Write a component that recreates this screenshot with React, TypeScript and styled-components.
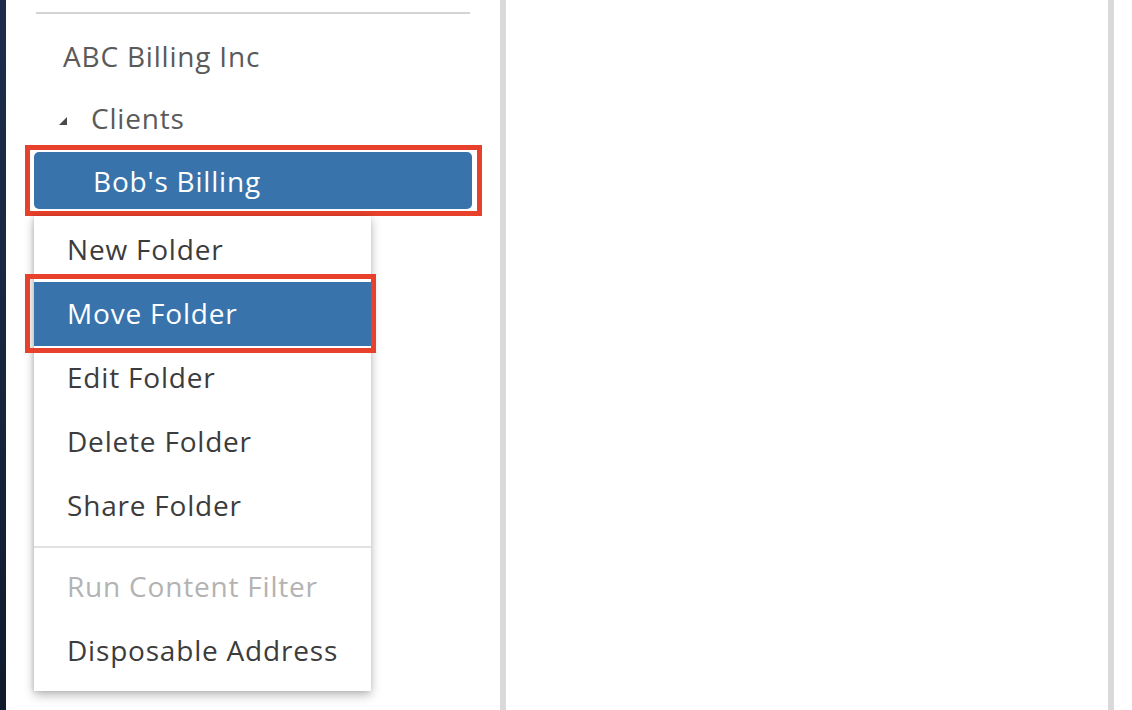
import React from "react";
import styled, { createGlobalStyle } from "styled-components";

const Global = createGlobalStyle`
  html, body { margin: 0; padding: 0; background: #ffffff; }
  body { font-family: "Open Sans", "Liberation Sans", sans-serif; }
`;

const Page = styled.div`
  display: flex;
  width: 1132px;
  height: 710px;
  overflow: hidden;
  background: #ffffff;
`;

const Backdrop = styled.div`
  width: 6px;
  flex: none;
  background: linear-gradient(180deg, #1c2d4c 0%, #17263f 50%, #0f1a2c 100%);
`;

const Sidebar = styled.div`
  position: relative;
  width: 494px;
  flex: none;
  background: #ffffff;
`;

const Splitter = styled.div`
  width: 6px;
  flex: none;
  background: #d9d9d9;
`;

const Main = styled.div`
  width: 602px;
  flex: none;
  background: #ffffff;
`;

const Gutter = styled.div`
  flex: 1;
  background: #ffffff;
`;

const TopRule = styled.div`
  height: 2px;
  margin: 12px 30px 0 30px;
  background: #d4d4d4;
`;

const Tree = styled.div`
  display: flex;
  flex-direction: column;
  padding-top: 11px;
`;

const TreeRow = styled.div<{ $indent: number }>`
  display: flex;
  align-items: center;
  height: 62px;
  padding-left: ${(p) => p.$indent}px;
  font-size: 28px;
  color: #5a5a5a;
  letter-spacing: 0.8px;
`;

const Caret = styled.span`
  width: 0;
  height: 0;
  border-left: 8px solid transparent;
  border-bottom: 8px solid #4a4a4a;
  margin-right: 24px;
  margin-top: 6px;
`;

const SelectedRow = styled.div`
  position: relative;
  display: flex;
  align-items: center;
  height: 57px;
  margin: 3px 28px 0 28px;
  padding-left: 59px;
  border-radius: 5px;
  background: #3874ab;
  color: #ffffff;
  font-size: 28px;
  letter-spacing: 0.8px;
`;

const Callout = styled.span<{ $t: number; $r: number; $b: number; $l: number }>`
  position: absolute;
  top: ${(p) => p.$t}px;
  right: ${(p) => p.$r}px;
  bottom: ${(p) => p.$b}px;
  left: ${(p) => p.$l}px;
  border: 5px solid #e8412b;
  pointer-events: none;
`;

const Menu = styled.div`
  position: absolute;
  left: 28px;
  top: 216px;
  width: 337px;
  padding: 2px 0 8px;
  background: #ffffff;
  box-shadow: 0 4px 10px rgba(0, 0, 0, 0.28), -1px 0 4px rgba(0, 0, 0, 0.12);
`;

const MenuItem = styled.div<{ $active?: boolean; $disabled?: boolean }>`
  position: relative;
  display: flex;
  align-items: center;
  height: 64px;
  padding-left: 33px;
  padding-bottom: 3px;
  box-sizing: border-box;
  font-size: 28px;
  letter-spacing: 0.8px;
  background: ${(p) => (p.$active ? "#3874ab" : "transparent")};
  color: ${(p) => (p.$active ? "#ffffff" : p.$disabled ? "#b3b3b3" : "#3c3c3c")};
`;

const MenuSeparator = styled.div`
  height: 2px;
  margin: 8px 0 7px;
  background: #e2e2e2;
`;

export default function App() {
  return (
    <>
      <Global />
      <Page>
        <Backdrop />
        <Sidebar>
          <TopRule />
          <Tree>
            <TreeRow $indent={57}>ABC Billing Inc</TreeRow>
            <TreeRow $indent={53}>
              <Caret />
              Clients
            </TreeRow>
            <SelectedRow>
              Bob's Billing
              <Callout $t={-7} $r={-10} $b={-7} $l={-9} />
            </SelectedRow>
          </Tree>
          <Menu>
            <MenuItem>New Folder</MenuItem>
            <MenuItem $active>
              Move Folder
              <Callout $t={-8} $r={-5} $b={-7} $l={-9} />
            </MenuItem>
            <MenuItem>Edit Folder</MenuItem>
            <MenuItem>Delete Folder</MenuItem>
            <MenuItem>Share Folder</MenuItem>
            <MenuSeparator />
            <MenuItem $disabled>Run Content Filter</MenuItem>
            <MenuItem>Disposable Address</MenuItem>
          </Menu>
        </Sidebar>
        <Splitter />
        <Main />
        <Splitter />
        <Gutter />
      </Page>
    </>
  );
}
